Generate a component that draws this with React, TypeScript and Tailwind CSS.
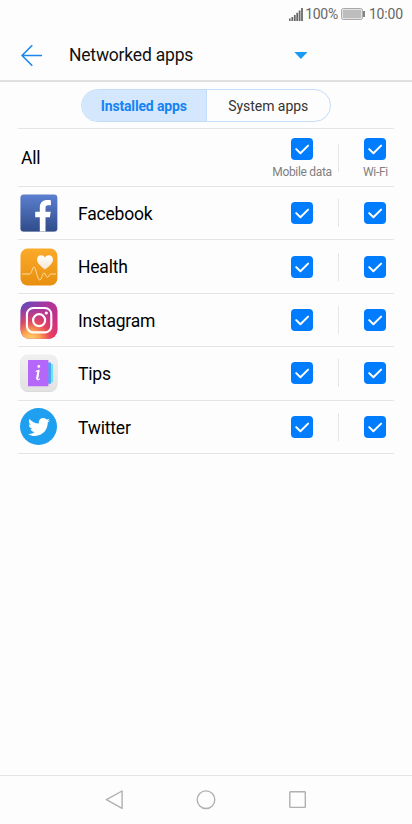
import type { ReactNode } from 'react';
import { FaTwitter } from 'react-icons/fa';

interface AppRowProps {
  name: string;
  icon: ReactNode;
}

const FacebookIcon = () => (
  <svg viewBox="0 0 38 38" className="size-[38px]">
    <defs>
      <linearGradient id="fb" x1="0" y1="0" x2="0" y2="1">
        <stop offset="0" stopColor="#5c80d0" />
        <stop offset="1" stopColor="#2f4b8a" />
      </linearGradient>
    </defs>
    <rect x="0.5" y="1.3" width="36.8" height="36.7" rx="3.2" fill="#c9ccd3" />
    <rect x="0.5" y="0.6" width="36.8" height="36.8" rx="3.2" fill="url(#fb)" />
    <path
      d="M19.8 37.4V23.2h-4.6v-5.4h4.6v-4.2c0-4.9 3-7.5 7.5-7.5 1.6 0 3 .1 3.6.2v4.9h-2.6c-2.3 0-2.8 1.1-2.8 2.8v3.8h5.2l-.8 5.4h-4.4v14.2z"
      fill="#fff"
    />
  </svg>
);

const HealthIcon = () => (
  <svg viewBox="0 0 38 38" className="size-[38px]">
    <defs>
      <linearGradient id="health" x1="0" y1="0" x2="0" y2="1">
        <stop offset="0" stopColor="#fbaa29" />
        <stop offset="1" stopColor="#e88f10" />
      </linearGradient>
      <linearGradient id="heart" x1="0" y1="0" x2="0" y2="1">
        <stop offset="0" stopColor="#fff" />
        <stop offset="1" stopColor="#f4e6d4" />
      </linearGradient>
    </defs>
    <rect x="0.5" y="0.6" width="36.9" height="37" rx="7" fill="url(#health)" />
    <path
      d="M25 21.5c-3.4-2.4-8-5.8-8-9.9 0-2.6 1.9-4.3 4.1-4.3 1.6 0 3 .8 3.9 2.2.9-1.4 2.3-2.2 3.9-2.2 2.2 0 4.1 1.7 4.1 4.3 0 4.1-4.6 7.5-8 9.9z"
      fill="url(#heart)"
    />
    <path
      d="M2 26h7.6c2.3 0 2.6-7 4.4-7s3.4 13 5.8 13c2 0 2.4-7 4.2-7 1.6 0 1.8 4.3 3.4 4.3 1.5 0 1.6-3.3 3.6-3.3h5"
      fill="none"
      stroke="#ffe3ae"
      strokeWidth="0.9"
    />
  </svg>
);

const InstagramIcon = () => (
  <svg viewBox="0 0 38 38" className="size-[38px]">
    <defs>
      <linearGradient id="igBase" x1="0" y1="0" x2="1" y2="0.8">
        <stop offset="0" stopColor="#5a4cc0" />
        <stop offset="0.45" stopColor="#a8369f" />
        <stop offset="1" stopColor="#d62c78" />
      </linearGradient>
      <radialGradient id="igGlow" cx="0.28" cy="1.05" r="0.95">
        <stop offset="0" stopColor="#ffd974" />
        <stop offset="0.28" stopColor="#fca34e" />
        <stop offset="0.55" stopColor="#ef4c51" stopOpacity="0.8" />
        <stop offset="1" stopColor="#d6308a" stopOpacity="0" />
      </radialGradient>
    </defs>
    <rect x="0.5" y="0.6" width="37" height="37.2" rx="9" fill="url(#igBase)" />
    <rect x="0.5" y="0.6" width="37" height="37.2" rx="9" fill="url(#igGlow)" />
    <rect x="6.9" y="7" width="24.4" height="24.4" rx="6.4" fill="none" stroke="#fff" strokeWidth="2.1" />
    <circle cx="19.1" cy="19.2" r="6" fill="none" stroke="#fff" strokeWidth="2.2" />
    <circle cx="26.3" cy="12" r="1.6" fill="#fff" />
  </svg>
);

const TipsIcon = () => (
  <svg viewBox="0 0 38 38" className="size-[38px]">
    <defs>
      <linearGradient id="tips" x1="0" y1="0" x2="0" y2="1">
        <stop offset="0" stopColor="#f0f0f0" />
        <stop offset="1" stopColor="#e2e2e2" />
      </linearGradient>
    </defs>
    <rect x="0.4" y="1" width="37" height="37" rx="7.5" fill="#d4d4d4" />
    <rect x="0.4" y="0.4" width="37" height="37" rx="7.5" fill="url(#tips)" />
    <rect x="28" y="9.9" width="5.1" height="18.4" rx="0.6" fill="#66e6f3" />
    <rect x="27" y="8.4" width="4" height="21.4" rx="0.6" fill="#4ba5f2" />
    <rect x="8" y="6" width="20.4" height="26.3" rx="0.6" fill="#b467f8" />
    <circle cx="18.8" cy="12.4" r="1.4" fill="#fff" />
    <path d="M15.7 17.6c1.2-.5 2.2-.9 3.2-1.2l-1.6 8.7c-.2 1.2 1 .8 2.5-.5" fill="none" stroke="#fff" strokeWidth="1.1" />
    <path d="M18.5 17l-1.6 8.3" fill="none" stroke="#fff" strokeWidth="2" />
  </svg>
);

const TwitterIcon = () => (
  <span className="mr-px flex size-[37px] items-center justify-center rounded-full bg-[#1f9ff0]">
    <FaTwitter className="size-[22px] text-white" />
  </span>
);

const Checkbox = () => (
  <svg viewBox="0 0 22 22" className="size-[22px] shrink-0">
    <rect width="22" height="22" rx="4" fill="#007dff" />
    <path d="M5.2 11.1l4.2 4.2 7.7-7.7" fill="none" stroke="#fff" strokeWidth="2" strokeLinecap="round" strokeLinejoin="round" />
  </svg>
);

const AppRow = ({ name, icon }: AppRowProps) => (
  <li className="flex h-[53.4px] items-center border-b border-[#e4e4e4]">
    <span className="ml-[2px] flex w-[38px] justify-center">{icon}</span>
    <span className="ml-5 flex-1 pt-[2px] text-[17.5px] tracking-[-0.2px] text-black">{name}</span>
    <span className="flex w-[72px] justify-center">
      <Checkbox />
    </span>
    <span className="h-7 w-px bg-[#e6e6e6]" />
    <span className="ml-[18px] flex w-[37px] pl-[7px]">
      <Checkbox />
    </span>
  </li>
);

const apps: AppRowProps[] = [
  { name: 'Facebook', icon: <FacebookIcon /> },
  { name: 'Health', icon: <HealthIcon /> },
  { name: 'Instagram', icon: <InstagramIcon /> },
  { name: 'Tips', icon: <TipsIcon /> },
  { name: 'Twitter', icon: <TwitterIcon /> },
];

export default function App() {
  return (
    <div className="flex h-[824px] w-[412px] flex-col overflow-hidden bg-[#fdfdfd] font-[Roboto,sans-serif]">
      {/* Status bar */}
      <div className="flex h-7 items-center justify-end pr-[9px] text-[14px] text-[#666]">
        <svg viewBox="0 0 14 13" className="h-[13px] w-[14px]" fill="#6a6a6a">
          <rect x="0" y="10.5" width="1.6" height="2.5" />
          <rect x="2.4" y="9" width="1.8" height="4" />
          <rect x="4.9" y="7" width="1.8" height="6" />
          <rect x="7.3" y="4.8" width="1.8" height="8.2" />
          <rect x="9.7" y="2.5" width="1.8" height="10.5" />
          <rect x="12.1" y="0" width="1.8" height="13" />
        </svg>
        <span className="ml-0.5 pt-px tracking-[-0.3px]">100%</span>
        <svg viewBox="0 0 24 12" className="ml-[3px] h-3 w-6">
          <rect x="0.5" y="0.5" width="21" height="11" rx="1.8" fill="#eee" stroke="#a8a8a8" />
          <rect x="1.8" y="1.8" width="18.4" height="8.4" rx="0.6" fill="#bdbdbd" />
          <rect x="22.2" y="3" width="1.6" height="6" fill="#666" />
        </svg>
        <span className="ml-[4px] pt-px tracking-[-0.15px]">10:00</span>
      </div>

      {/* Header */}
      <header className="flex h-[54px] items-center border-b-2 border-[#e0e0e0] pl-[21px]">
        <svg viewBox="0 0 21 21" className="mt-[2px] size-[21px]" fill="none" stroke="#1c86ee" strokeWidth="1.6" strokeLinecap="round" strokeLinejoin="round">
          <path d="M20.4 10.5H1M10.8 0.8L1 10.5l9.8 9.7" />
        </svg>
        <h1 className="ml-[27px] w-[225px] pt-[2px] text-[17.5px] tracking-[-0.2px] text-[#111]">Networked apps</h1>
        <svg viewBox="0 0 14 7" className="mt-[3px] h-[7px] w-[14px]">
          <path d="M0.3 0h13.2L6.9 7z" fill="#199bf5" />
        </svg>
      </header>

      {/* Tabs */}
      <div className="mx-auto mt-[7px] flex h-[33px] w-[250px] overflow-hidden rounded-full border border-[#c3dcf8] text-[14px] tracking-[-0.05px]">
        <button className="w-[124.5px] border-r border-[#c3dcf8] bg-[#d5e7fd] pt-px font-bold tracking-[-0.15px] text-[#1483f3]">Installed apps</button>
        <button className="flex-1 pt-px text-[#333]">System apps</button>
      </div>

      <div className="mx-[18px] mt-[6px] flex h-[59px] border-y border-[#e4e4e4] text-[12px] tracking-[-0.32px] text-[#808080]">
        <span className="ml-[3px] flex-1 self-center pt-[2px] text-[17.5px] tracking-[-0.2px] text-black">All</span>
        <div className="flex w-[72px] flex-col items-center pt-[9px]">
          <Checkbox />
          <span className="mt-[5px] leading-[14px] whitespace-nowrap">Mobile data</span>
        </div>
        <span className="h-7 w-px self-center bg-[#e6e6e6]" />
        <div className="ml-[18px] flex w-[37px] flex-col pt-[9px] pl-[7px]">
          <Checkbox />
          <span className="-ml-px mt-[5px] leading-[14px] whitespace-nowrap">Wi-Fi</span>
        </div>
      </div>
      <ul className="mx-[18px]">
        {apps.map((app) => (
          <AppRow key={app.name} {...app} />
        ))}
      </ul>

      {/* Navigation bar */}
      <nav className="mt-auto flex h-[49px] items-center justify-center gap-[72px] border-t border-[#e4e4e4]">
        <svg viewBox="0 0 20 20" className="size-5" fill="none" stroke="#b0b0b0" strokeWidth="1.4" strokeLinejoin="round">
          <path d="M18.1 1v17.4L2.4 9.7z" />
        </svg>
        <svg viewBox="0 0 20 20" className="size-5" fill="none" stroke="#b0b0b0" strokeWidth="1.4">
          <circle cx="10" cy="9.7" r="8.8" />
        </svg>
        <svg viewBox="0 0 20 20" className="size-5" fill="none" stroke="#b0b0b0" strokeWidth="1.4">
          <rect x="1.8" y="1.8" width="15.5" height="15.6" rx="0.6" />
        </svg>
      </nav>
    </div>
  );
}
